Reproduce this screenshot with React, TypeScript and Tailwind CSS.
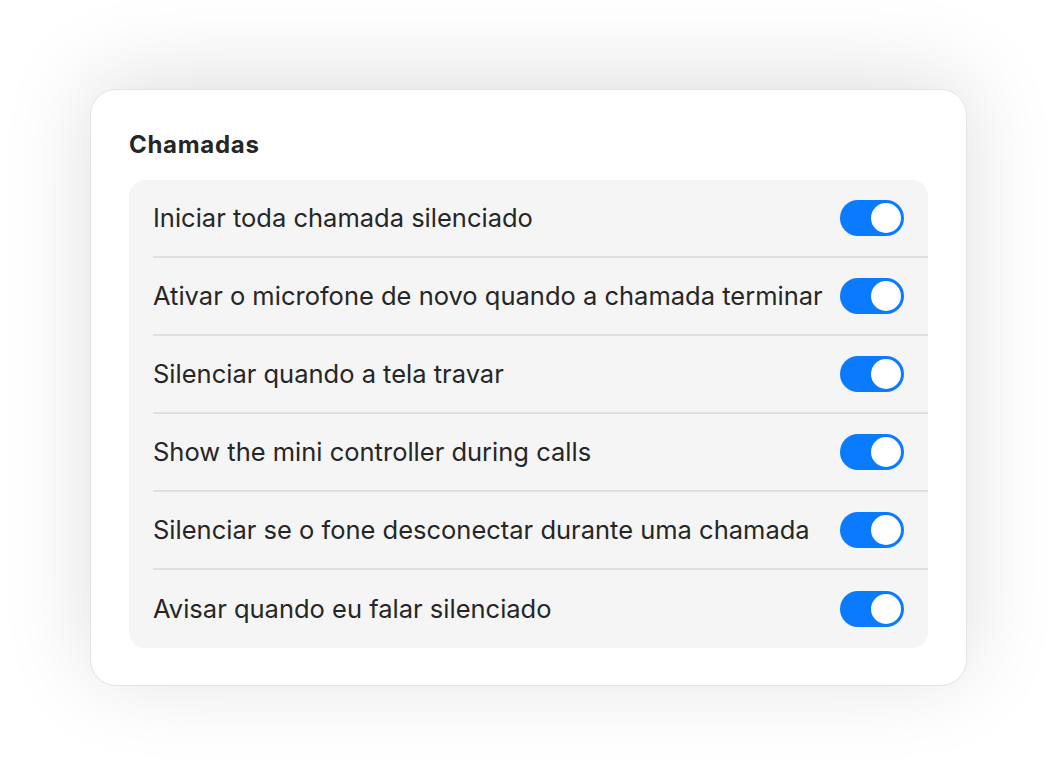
const items = [
  'Iniciar toda chamada silenciado',
  'Ativar o microfone de novo quando a chamada terminar',
  'Silenciar quando a tela travar',
  'Show the mini controller during calls',
  'Silenciar se o fone desconectar durante uma chamada',
  'Avisar quando eu falar silenciado',
];

const Toggle = () => (
  <div className="w-[64px] h-[36px] rounded-full bg-[#0a7aff] flex items-center justify-end px-[3px] shrink-0">
    <div className="w-[30px] h-[30px] rounded-full bg-white" />
  </div>
);

export default function App() {
  return (
    <div
      className="w-[1056px] h-[774px] bg-white pt-[89px] pl-[90px]"
      style={{ fontFamily: 'Inter, "Noto Sans", sans-serif' }}
    >
      <div className="w-[877px] h-[597px] bg-white rounded-[26px] border border-[#e4e4e4] shadow-[0_-10px_90px_rgba(0,0,0,0.13)] px-[38px] pt-[38px]">
        <div className="text-[24px] font-bold text-[#262626] leading-[34px] h-[52px] tracking-[0.7px]">Chamadas</div>
        <div className="bg-[#f5f5f5] rounded-[16px] pl-[24px]">
          {items.map((t, i) => (
            <div
              key={t}
              className={`flex items-center justify-between h-[78px] pr-[24px] ${
                i < items.length - 1 ? 'border-b-2 border-[#e0e0e0]' : ''
              }`}
            >
              <span className="text-[25.5px] text-[#262626]">{t}</span>
              <Toggle />
            </div>
          ))}
        </div>
      </div>
    </div>
  );
}
